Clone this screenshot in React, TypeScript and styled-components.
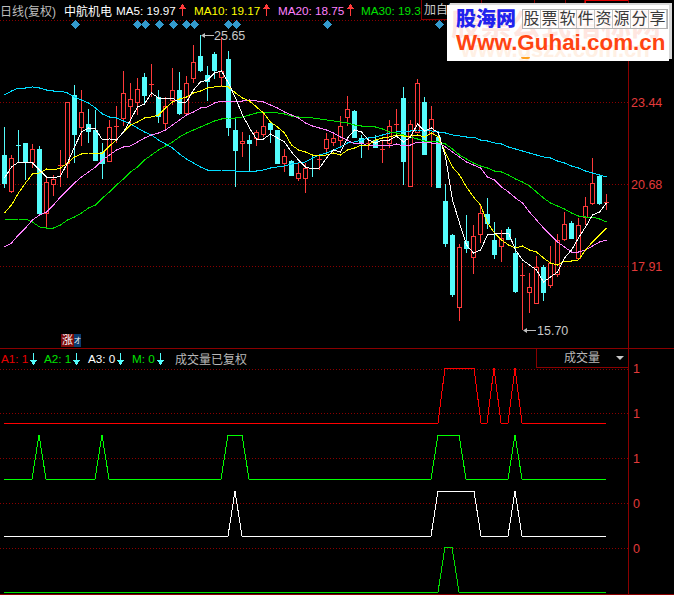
import React from 'react';
import styled, { createGlobalStyle } from 'styled-components';

const UI_FONT = '"Liberation Sans", "Noto Sans CJK SC", sans-serif';
const GRID = '#8a0000';
const AXIS_RED = '#e23a3a';
const CANDLE_RED = '#ff3a3a';
const CANDLE_CYAN = '#54fcfc';
const step = (i: number) => 4.5 + 7 * i;

type Candle = [number, number, number, number, 'r' | 'c'];

// high, body top, body bottom, low, colour
const candles: Candle[] = [
    [127, 155, 183, 188, 'c'], [155, 158, 191, 193, 'r'], [130, 145, 146, 163, 'c'], [143, 143, 162, 180, 'c'],
    [144, 149, 162, 168, 'r'], [146, 149, 213, 213, 'c'], [176, 182, 213, 228, 'r'], [175, 179, 184, 196, 'r'],
    [150, 165, 166, 187, 'r'], [102, 102, 163, 178, 'r'], [85, 95, 134, 163, 'c'], [90, 112, 127, 146, 'r'],
    [109, 124, 131, 143, 'c'], [110, 130, 160, 160, 'c'], [143, 152, 163, 179, 'c'], [120, 127, 161, 161, 'r'],
    [106, 126, 127, 143, 'r'], [71, 93, 118, 126, 'r'], [83, 99, 106, 126, 'r'], [78, 89, 102, 115, 'r'],
    [73, 77, 95, 105, 'c'], [64, 84, 85, 97, 'r'], [90, 97, 116, 123, 'c'], [97, 106, 123, 130, 'r'],
    [68, 90, 100, 105, 'r'], [72, 90, 113, 115, 'c'], [76, 83, 113, 113, 'r'], [45, 62, 78, 83, 'r'],
    [35, 56, 70, 72, 'c'], [66, 75, 81, 101, 'c'], [52, 54, 70, 79, 'c'], [37, 71, 77, 87, 'r'],
    [51, 59, 127, 136, 'c'], [119, 130, 150, 187, 'c'], [132, 141, 143, 157, 'r'], [135, 140, 143, 171, 'c'],
    [130, 132, 138, 146, 'r'], [112, 126, 134, 137, 'r'], [123, 123, 129, 143, 'c'], [130, 130, 163, 163, 'c'],
    [149, 156, 163, 172, 'r'], [160, 161, 175, 176, 'c'], [163, 173, 178, 181, 'r'], [163, 168, 178, 193, 'r'],
    [155, 168, 169, 177, 'c'], [155, 159, 160, 170, 'r'], [133, 139, 148, 155, 'r'], [132, 138, 142, 146, 'r'],
    [116, 126, 140, 146, 'r'], [96, 109, 117, 126, 'r'], [110, 111, 137, 138, 'c'], [135, 138, 143, 158, 'c'],
    [138, 143, 144, 150, 'r'], [135, 140, 147, 147, 'c'], [140, 149, 150, 163, 'r'], [120, 126, 143, 148, 'r'],
    [109, 124, 125, 135, 'r'], [87, 98, 161, 185, 'c'], [120, 124, 186, 186, 'r'], [79, 83, 132, 132, 'r'],
    [97, 102, 154, 154, 'c'], [106, 119, 133, 187, 'r'], [132, 137, 187, 187, 'c'], [184, 201, 243, 247, 'c'],
    [234, 235, 294, 297, 'c'], [244, 247, 307, 321, 'r'], [215, 241, 248, 253, 'c'], [225, 236, 257, 274, 'r'],
    [205, 213, 234, 243, 'r'], [198, 214, 223, 229, 'c'], [222, 240, 254, 259, 'c'], [230, 238, 246, 262, 'r'],
    [227, 229, 239, 240, 'c'], [238, 253, 291, 293, 'c'], [263, 275, 276, 330, 'r'], [273, 287, 292, 313, 'r'],
    [256, 267, 303, 303, 'r'], [265, 267, 292, 301, 'c'], [246, 263, 285, 288, 'r'], [234, 240, 274, 277, 'r'],
    [212, 224, 239, 241, 'r'], [221, 223, 238, 238, 'c'], [218, 225, 258, 260, 'r'], [197, 206, 217, 225, 'r'],
    [158, 183, 203, 205, 'r'], [175, 176, 203, 205, 'c'], [194, 202, 203, 210, 'r'],
];

const averages: { color: string; values: number[] }[] = [
    {
        color: '#00dcff',
        values: [95, 91, 88, 88, 87, 88, 90, 91, 91, 93, 97, 100, 103, 108, 114, 117, 118, 121, 124, 128, 132, 135, 140, 144, 148, 154, 159, 163, 167, 170, 171, 170, 170, 171, 171, 171, 171, 170, 168, 167, 166, 164, 163, 162, 158, 155, 153, 150, 147, 143, 142, 140, 138, 137, 135, 133, 132, 131, 131, 130, 130, 131, 132, 133, 135, 136, 137, 137, 140, 141, 143, 144, 147, 149, 151, 153, 155, 157, 158, 161, 163, 166, 168, 171, 173, 175, 177],
    },
    {
        color: '#00e000',
        values: [219, 220, 219, 219, 222, 227, 228, 228, 225, 220, 217, 213, 208, 205, 198, 192, 185, 179, 172, 167, 160, 155, 150, 146, 142, 137, 133, 130, 127, 124, 121, 119, 118, 118, 117, 115, 113, 112, 112, 113, 114, 116, 117, 117, 118, 119, 120, 121, 122, 123, 125, 126, 126, 127, 129, 132, 133, 135, 137, 139, 141, 141, 142, 144, 149, 155, 159, 163, 166, 168, 171, 172, 175, 179, 182, 186, 192, 198, 203, 206, 209, 213, 216, 217, 217, 219, 222],
    },
    {
        color: '#ff80ff',
        values: [247, 243, 235, 228, 220, 215, 212, 205, 197, 190, 183, 177, 172, 167, 160, 155, 150, 147, 146, 142, 138, 135, 133, 130, 125, 120, 115, 112, 108, 107, 103, 101, 101, 101, 101, 100, 101, 102, 105, 108, 112, 115, 118, 123, 126, 128, 130, 133, 137, 140, 144, 143, 146, 145, 145, 146, 144, 146, 145, 142, 142, 143, 143, 147, 152, 157, 162, 165, 168, 177, 180, 187, 192, 198, 203, 212, 220, 228, 235, 242, 247, 252, 252, 250, 246, 242, 240],
    },
    {
        color: '#ffff00',
        values: [213, 205, 193, 183, 174, 173, 169, 170, 168, 163, 157, 154, 153, 153, 153, 146, 140, 132, 125, 122, 118, 117, 115, 108, 102, 99, 97, 93, 91, 88, 87, 86, 87, 93, 98, 101, 107, 113, 122, 127, 133, 145, 150, 152, 155, 156, 155, 153, 155, 150, 148, 145, 145, 140, 138, 137, 135, 136, 136, 135, 137, 133, 137, 153, 167, 175, 187, 197, 205, 223, 233, 240, 245, 248, 246, 250, 252, 258, 263, 265, 261, 261, 260, 250, 242, 235, 228],
    },
    {
        color: '#ffffff',
        values: [178, 167, 162, 162, 163, 170, 177, 178, 176, 163, 147, 132, 128, 129, 140, 139, 140, 132, 120, 107, 104, 93, 98, 98, 98, 103, 102, 90, 82, 80, 73, 71, 83, 98, 115, 128, 139, 139, 134, 138, 142, 152, 160, 167, 169, 168, 158, 150, 152, 138, 130, 132, 140, 143, 140, 140, 136, 142, 137, 124, 131, 128, 133, 157, 200, 223, 245, 253, 250, 235, 234, 233, 233, 250, 260, 265, 270, 282, 277, 272, 258, 250, 238, 227, 215, 212, 203],
    },
];

const diamonds = [75.7, 137.7, 145.7, 159.3, 173.3, 186.7, 194.7, 228.7, 236.7, 327.7, 439.3];

const signals: { color: string; points: string }[] = [
    { color: '#ff0000', points: '4,423 438,423 445,368 474,368 481,423 487,423 494,368 501,423 508,423 515,368 522,423 606,423' },
    { color: '#00ff00', points: '4,479 32,479 39,435 46,479 95,479 102,435 109,479 221,479 228,435 242,435 249,479 431,479 438,435 459,435 466,479 508,479 515,435 522,479 606,479' },
    { color: '#ffffff', points: '4,536 228,536 235,491 242,536 431,536 438,491 474,491 481,536 508,536 515,491 522,536 606,536' },
    { color: '#00e000', points: '4,592 438,592 445,547 452,547 459,592 606,592' },
];

const legend = [
    { label: 'MA5: 19.97', color: '#ffffff', width: 78 },
    { label: 'MA10: 19.17', color: '#ffff00', width: 84 },
    { label: 'MA20: 18.75', color: '#ff80ff', width: 83 },
];

const indicators = [
    { label: 'A1: 1', color: '#e80000', width: 43 },
    { label: 'A2: 1', color: '#00e000', width: 44 },
    { label: 'A3: 0', color: '#ffffff', width: 44 },
    { label: 'M: 0', color: '#00e000', width: 39 },
];

const Arrow = ({ color, down }: { color: string; down?: boolean }) => (
    <svg width="7" height="12" viewBox="0 0 7 12" shapeRendering="crispEdges">
        <path d={down ? 'M3 0h1v7h3l-3.5 5L0 7h3z' : 'M3 12h1V5h3L3.5 0 0 5h3z'} fill={color} />
    </svg>
);

const PriceChart = () => (
    <ChartSvg width="628" height="328" viewBox="0 20 628 328">
        {[20.5, 102.5, 184.5, 266.5].map(y => (
            <line key={y} x1="0" x2="628" y1={y} y2={y} stroke={GRID} strokeDasharray="1 2" />
        ))}
        <g shapeRendering="crispEdges">
            {candles.map(([high, top, bottom, low, kind], i) => {
                const x = step(i);
                const color = kind === 'r' ? CANDLE_RED : CANDLE_CYAN;
                if (bottom - top <= 1) {
                    return (
                        <g key={i} stroke={color}>
                            <line x1={x} x2={x} y1={high} y2={low} />
                            <line x1={x - 2.5} x2={x + 2.5} y1={top + 0.5} y2={top + 0.5} />
                        </g>
                    );
                }
                return (
                    <g key={i} stroke={color}>
                        <line x1={x} x2={x} y1={high} y2={top} />
                        <line x1={x} x2={x} y1={bottom} y2={low} />
                        <rect x={x - 2} y={top + 0.5} width="4" height={bottom - top} fill={kind === 'r' ? '#000' : color} />
                    </g>
                );
            })}
            {averages.map(({ color, values }) => (
                <polyline
                    key={color}
                    fill="none"
                    stroke={color}
                    points={values.map((y, i) => `${step(i)},${y}`).join(' ')}
                />
            ))}
            {diamonds.map(x => (
                <path key={x} d={`M${x} 20l4.5 4.5-4.5 4.5-4.5-4.5z`} fill="#3399cc" />
            ))}
        </g>
        <path d="M201 35.5l4-2.5v2h9v1h-9v2z" fill="#c0c0c0" />
        <ChartLabel x="214" y="40">25.65</ChartLabel>
        <path d="M523 330.5l4-2.5v2h9v1h-9v2z" fill="#c0c0c0" />
        <ChartLabel x="537" y="335">15.70</ChartLabel>
    </ChartSvg>
);

const SignalChart = () => (
    <ChartSvg width="628" height="225" viewBox="0 368 628 225">
        {[369.5, 413.5, 458.5, 503.5, 548.5].map(y => (
            <line key={y} x1="0" x2="628" y1={y} y2={y} stroke={GRID} strokeDasharray="1 2" />
        ))}
        <g shapeRendering="crispEdges" fill="none">
            {signals.map(({ color, points }) => (
                <polyline key={points} stroke={color} points={points} />
            ))}
        </g>
    </ChartSvg>
);

const App = () => (
    <Screen>
        <GlobalStyle />
        <PricePane>
            <Plot>
                <LegendBar>
                    <PeriodText>日线(复权)</PeriodText>
                    <StockName>中航机电</StockName>
                    {legend.map(item => (
                        <LegendItem key={item.label} $width={item.width} $color={item.color}>
                            {item.label}
                            <Arrow color="#ff3a3a" />
                        </LegendItem>
                    ))}
                    <LegendItem $width={60} $color="#00e000">MA30: 19.3</LegendItem>
                    <Toolbar>
                        <ToolButton $width={60}>加自选</ToolButton>
                        <ToolButton $width={53} />
                        <ToolButton $width={31} />
                        <ToolButton $width={19} />
                        <ActiveToolButton />
                    </Toolbar>
                </LegendBar>
                <PriceChart />
                <BadgeRow>
                    <Badge $bg="#7d0a0a" $width={13}>涨</Badge>
                    <Badge $bg="#0a3a6e" $width={7}><NarrowGlyph>才</NarrowGlyph></Badge>
                </BadgeRow>
            </Plot>
            <PriceAxis>
                <AxisLabel>23.44</AxisLabel>
                <AxisLabel>20.68</AxisLabel>
                <AxisLabel>17.91</AxisLabel>
            </PriceAxis>
        </PricePane>
        <SignalPane>
            <Plot>
                <IndicatorBar>
                    {indicators.map(item => (
                        <IndicatorItem key={item.label} $width={item.width} $color={item.color}>
                            <span>{item.label}</span>
                            <Arrow color={CANDLE_CYAN} down />
                        </IndicatorItem>
                    ))}
                    <IndicatorNote>成交量已复权</IndicatorNote>
                    <VolumeSelect>
                        成交量
                        <SelectCaret />
                    </VolumeSelect>
                </IndicatorBar>
                <SignalChart />
            </Plot>
            <SignalAxis>
                <SignalValue>1</SignalValue>
                <SignalValue>1</SignalValue>
                <SignalValue>1</SignalValue>
                <SignalValue>0</SignalValue>
                <SignalValue>0</SignalValue>
            </SignalAxis>
        </SignalPane>
        <LogoCard>
            <Watermark>股票公式指标网</Watermark>
            <WatermarkUrl>www.gszx.com.cn</WatermarkUrl>
            <LogoTop>
                <LogoName>股海网</LogoName>
                <SloganGrid>
                    {'股票软件资源分享'.split('').map((ch, i) => (
                        <SloganCell key={i}>{ch}</SloganCell>
                    ))}
                </SloganGrid>
            </LogoTop>
            <LogoUrl>Www.Guhai.com.cn</LogoUrl>
            <Swoosh />
        </LogoCard>
    </Screen>
);

export default App;

const GlobalStyle = createGlobalStyle`
    html, body {
        margin: 0;
        padding: 0;
        background: #000;
    }
`;

const Screen = styled.div`
    position: relative;
    width: 674px;
    height: 595px;
    overflow: hidden;
    background: #000;
    font-family: ${UI_FONT};
    display: flex;
    flex-direction: column;
`;

const PricePane = styled.div`
    height: 348px;
    display: flex;
    border-bottom: 1px solid ${GRID};
`;

const SignalPane = styled.div`
    height: 245px;
    display: flex;
    border-bottom: 1px solid ${GRID};
`;

const Plot = styled.div`
    position: relative;
    width: 628px;
    flex: none;
    display: flex;
    flex-direction: column;
`;

const ChartSvg = styled.svg`
    display: block;
    flex: none;
`;

const ChartLabel = styled.text`
    font-family: ${UI_FONT};
    font-size: 12.5px;
    fill: #c8c8c8;
`;

const LegendBar = styled.div`
    height: 20px;
    display: flex;
    align-items: center;
    font-size: 12px;
    white-space: nowrap;
`;

const PeriodText = styled.span`
    width: 64px;
    color: #bdbdbd;
`;

const StockName = styled.span`
    width: 52px;
    color: #fff;
`;

const LegendItem = styled.span<{ $width: number; $color: string }>`
    display: flex;
    align-items: center;
    gap: 3px;
    width: ${p => p.$width}px;
    font-size: 11.7px;
    color: ${p => p.$color};
`;

const Toolbar = styled.div`
    flex: 1;
    height: 20px;
    display: flex;
    box-sizing: border-box;
    border-left: 1px solid ${GRID};
    border-bottom: 1px solid ${GRID};
`;

const ToolButton = styled.span<{ $width: number }>`
    width: ${p => p.$width}px;
    box-sizing: border-box;
    padding-left: 2px;
    border-right: 1px solid ${GRID};
    font-size: 12px;
    line-height: 20px;
    color: #c8c8c8;
`;

const ActiveToolButton = styled.span`
    flex: 1;
    box-sizing: border-box;
    border-top: 1px solid #e00000;
    border-left: 1px solid #e00000;
`;

const BadgeRow = styled.div`
    position: absolute;
    left: 61px;
    top: 334px;
    display: flex;
`;

const Badge = styled.span<{ $bg: string; $width: number }>`
    width: ${p => p.$width}px;
    height: 13px;
    display: flex;
    justify-content: center;
    background: ${p => p.$bg};
    color: #fff;
    font-size: 11px;
    line-height: 13px;
`;

const NarrowGlyph = styled.span`
    display: inline-block;
    flex: none;
    width: 7px;
    font-size: 7px;
    text-align: center;
`;

const PriceAxis = styled.div`
    flex: 1;
    box-sizing: border-box;
    padding: 96px 0 0 2px;
    display: flex;
    flex-direction: column;
    gap: 68px;
    border-left: 1px solid ${GRID};
`;

const AxisLabel = styled.span`
    height: 14px;
    font-size: 12.5px;
    line-height: 14px;
    color: ${AXIS_RED};
`;

const IndicatorBar = styled.div`
    height: 19px;
    display: flex;
    align-items: center;
    padding-left: 1px;
    font-size: 11.7px;
    white-space: nowrap;
`;

const IndicatorItem = styled.span<{ $width: number; $color: string }>`
    display: flex;
    align-items: center;
    gap: 2px;
    width: ${p => p.$width}px;
    color: ${p => p.$color};
`;

const IndicatorNote = styled.span`
    margin-left: 4px;
    font-size: 12px;
    color: #b8b8b8;
`;

const VolumeSelect = styled.div`
    position: relative;
    margin-left: auto;
    width: 92px;
    height: 19px;
    box-sizing: border-box;
    padding-left: 27px;
    border-left: 1px solid ${GRID};
    border-bottom: 1px solid ${GRID};
    font-size: 12px;
    line-height: 18px;
    color: #b8b8b8;
`;

const SelectCaret = styled.i`
    position: absolute;
    right: 4px;
    top: 7px;
    border-left: 4px solid transparent;
    border-right: 4px solid transparent;
    border-top: 4px solid #c8c8c8;
`;

const SignalAxis = styled.div`
    flex: 1;
    box-sizing: border-box;
    padding: 13px 0 0 4px;
    display: flex;
    flex-direction: column;
    gap: 31px;
    border-left: 1px solid ${GRID};
`;

const SignalValue = styled.span`
    height: 14px;
    font-size: 12.5px;
    line-height: 14px;
    color: ${AXIS_RED};
`;

const LogoCard = styled.div`
    position: absolute;
    left: 447px;
    top: 5px;
    width: 222px;
    height: 56px;
    box-sizing: border-box;
    padding: 3px 2px 0 9px;
    background: #fff;
    box-shadow: 3px -2px 0 #d8d8d8;
    overflow: hidden;
`;

const Watermark = styled.div`
    position: absolute;
    left: 4px;
    top: 4px;
    font-size: 30px;
    line-height: 32px;
    font-weight: 700;
    white-space: nowrap;
    color: #ffe6e0;
`;

const WatermarkUrl = styled.div`
    position: absolute;
    left: 14px;
    top: 34px;
    font-size: 22px;
    line-height: 22px;
    font-weight: 700;
    white-space: nowrap;
    color: #fff0e4;
`;

const LogoTop = styled.div`
    position: relative;
    display: flex;
    align-items: center;
    gap: 6px;
`;

const LogoName = styled.div`
    width: 60px;
    font-size: 20px;
    line-height: 22px;
    font-weight: 900;
    white-space: nowrap;
    color: #2222ee;
`;

const SloganGrid = styled.div`
    display: flex;
    border: 1px solid #b0b0b0;
    background: rgba(255, 255, 255, 0.6);
`;

const SloganCell = styled.span`
    width: 18px;
    height: 18px;
    box-sizing: border-box;
    border-right: 1px solid #c4c4c4;
    font-family: "Liberation Serif", "Noto Sans CJK SC", serif;
    font-size: 16px;
    line-height: 18px;
    text-align: center;
    color: #3a3a3a;
`;

const LogoUrl = styled.div`
    position: relative;
    font-size: 22.4px;
    line-height: 25px;
    font-weight: 700;
    white-space: nowrap;
    color: #ff4412;
`;

const Swoosh = styled.div`
    position: absolute;
    left: 74px;
    bottom: 2px;
    width: 9px;
    height: 2px;
    border-radius: 0 0 5px 5px;
    background: #ffa01e;
`;
